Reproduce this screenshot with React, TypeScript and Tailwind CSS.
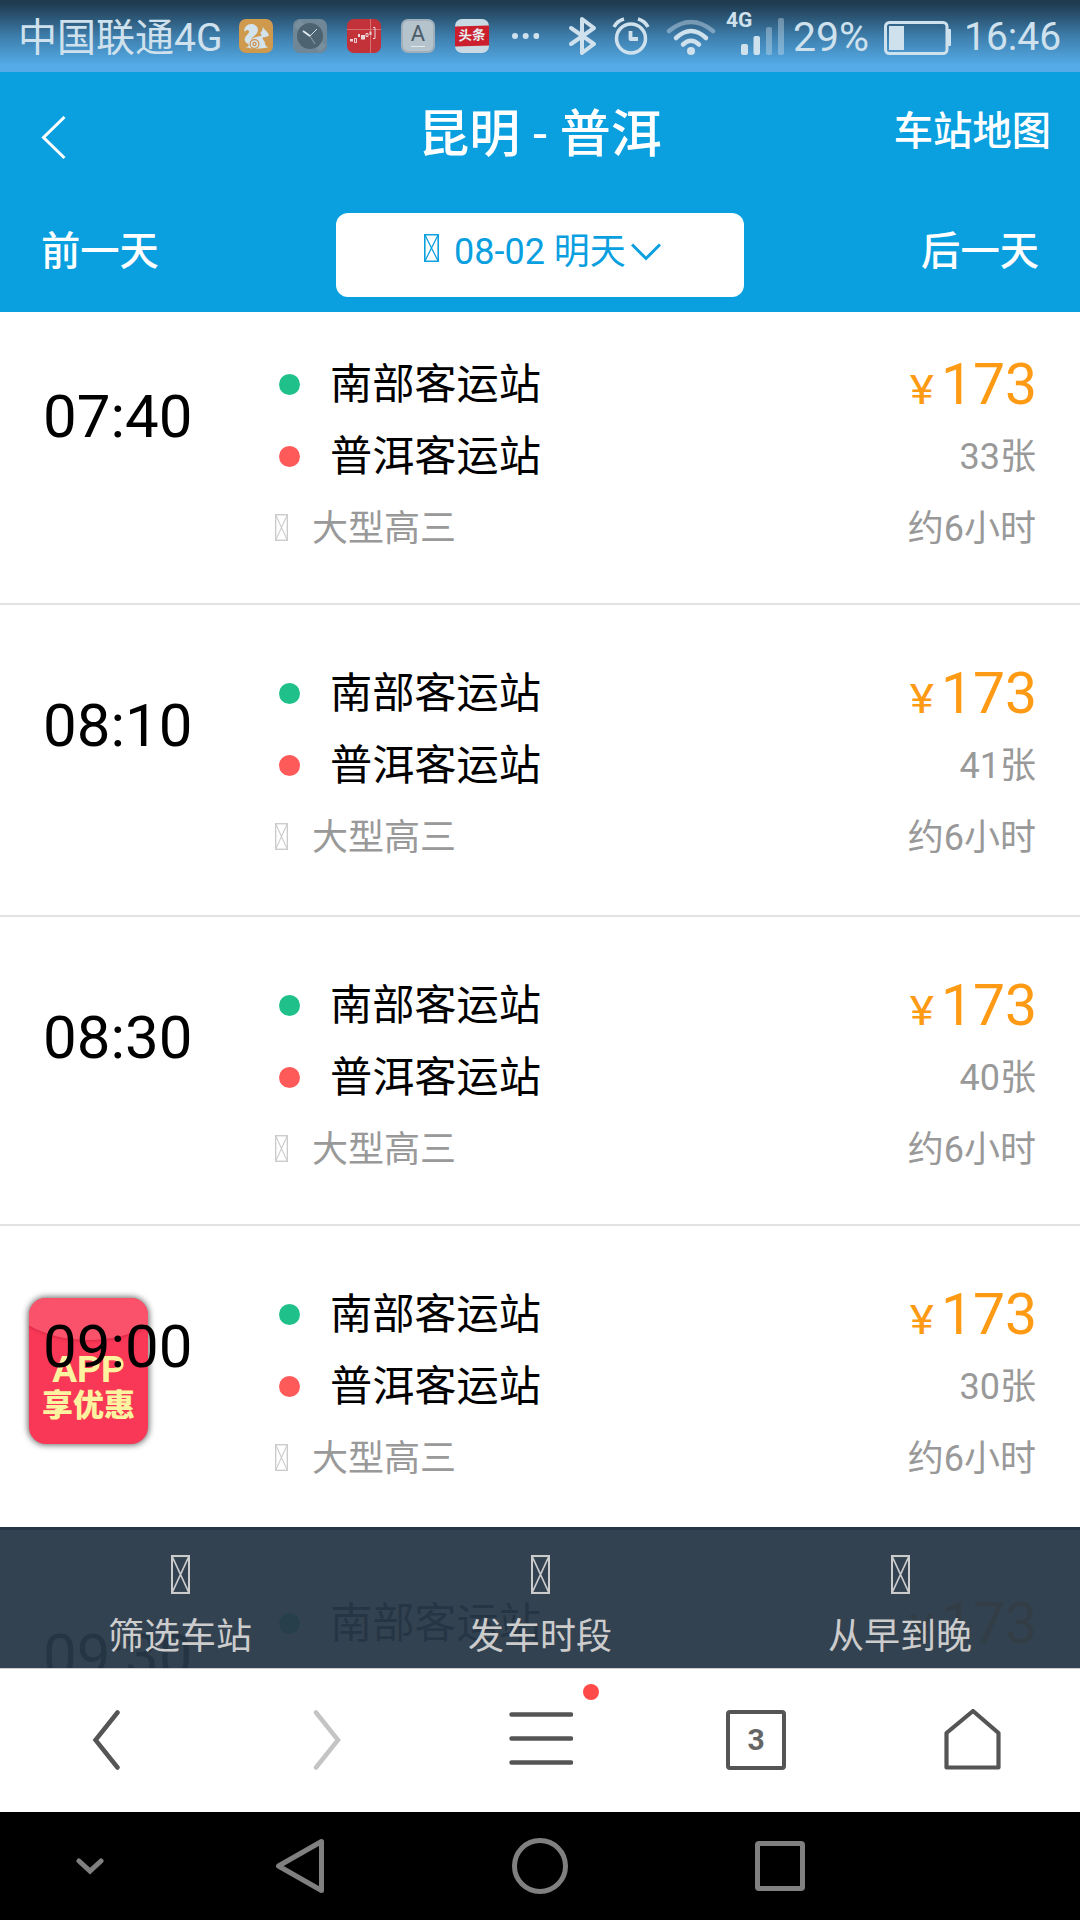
import React from 'react';

type Trip = {
  time: string;
  seats?: string;
  height: string;
};

const trips: Trip[] = [
  { time: '07:40', seats: '33张', height: 'h-[293px] pt-[35px]' },
  { time: '08:10', seats: '41张', height: 'h-[312px] pt-[51px]' },
  { time: '08:30', seats: '40张', height: 'h-[309px] pt-[51px]' },
  { time: '09:00', seats: '30张', height: 'h-[309px] pt-[51px]' },
  { time: '09:30', height: 'h-[309px] pt-[51px]' },
];

const filters = ['筛选车站', '发车时段', '从早到晚'];

// Box shown where the icon font has no glyph
const MissingGlyph = ({ className }: { className: string }) => (
  <svg className={className} viewBox="0 0 19 38" preserveAspectRatio="none" fill="none" stroke="currentColor">
    <rect x="1" y="1" width="17" height="36" strokeWidth="2" />
    <path d="M1 1L18 37M18 1L1 37" strokeWidth="1.6" />
  </svg>
);

const SquirrelIcon = () => (
  <svg className="h-[34px] w-[34px]" viewBox="0 0 34 34">
    <rect width="34" height="34" rx="7" fill="#cf9a4d" />
    <path
      d="M6 28C9 28 10 27 9.500 25C5 24 4.500 19 8 16C10 14 11 12 9 11C7.500 10.500 6 12 5.500 13C4.500 9 8 5 12 5C18 5 20.500 10 18 14C16 17 13 18 12 21C15 17 20 18 23 16.500C21 15 21 13 23 12L24 8L26 11C28 12 29 14 30 16.500C28 18 25 18 23.500 18.500C23.500 21 26 22 26 24.500C26 27 28 27.500 29 28.500Q17 31 6 28Z"
      fill="#d3e3ec"
    />
    <circle cx="15.500" cy="25" r="5" fill="#cf904c" />
    <circle cx="15.500" cy="25" r="3.800" fill="#d3e3ec" />
    <circle cx="15.500" cy="25" r="2.200" fill="#cf904c" />
    <circle cx="15.500" cy="25" r="1" fill="#d3e3ec" />
  </svg>
);

const ClockIcon = () => (
  <svg className="h-[34px] w-[34px]" viewBox="0 0 34 34">
    <rect width="34" height="34" rx="7" fill="#6f8797" />
    <path d="M1 7L7 1L33 27L27 33Z" fill="#8399a8" opacity=".5" />
    <circle cx="17" cy="17" r="13" fill="#4d6372" />
    <path d="M10 12L17 17" stroke="#e2ecf2" strokeWidth="1.8" />
    <path d="M17 17L24 10" stroke="#d5e2ea" strokeWidth="1" />
    <path d="M17 17L22 25" stroke="#8fa2af" strokeWidth="1" />
  </svg>
);

const StockIcon = () => (
  <svg className="h-[34px] w-[34px]" viewBox="0 0 34 34">
    <rect width="34" height="34" rx="7" fill="#c23238" />
    <path d="M0 10.500H34M23.500 0V34" stroke="#d98083" strokeWidth=".8" />
    <path
      d="M7.500 19.500h2v4h-2zM19 14.500h2v3h-2zM26 8.500h2v11h-2"
      fill="none"
      stroke="#ead5da"
      strokeWidth="1"
    />
    <path d="M3 20h3v2.500H3zM11 15h2v3h-2zM14 16h4v4.500h-4zM22.500 12.500h2v3.500h-2z" fill="#ead5da" />
  </svg>
);

const KeyIcon = () => (
  <div className="flex h-[34px] w-[34px] flex-col items-center rounded-[7px] border-2 border-[#9fb0bc] bg-[#b5c3cc] text-[#4b5c69]">
    <span className="text-[22px] leading-[26px]">A</span>
    <span className="-mt-px h-px w-[14px] bg-[#e2ebf0]" />
  </div>
);

const NewsIcon = () => (
  <div className="flex h-[34px] w-[34px] items-center overflow-hidden rounded-[7px] bg-[#c9dae4]">
    <div className="h-5 w-[34px] -skew-y-2 bg-[#cc1f2d] text-center text-[13.5px] leading-[19px] font-bold text-[#e6eef2]">
      头条
    </div>
  </div>
);

const StatusBar = () => (
  <div className="flex h-[72px] items-center bg-linear-to-b from-[#1f3b50] from-5% via-[#3d7dab] via-50% to-[#54abe7] to-90% pl-[18px] text-[40px] text-[#cfe1ed]">
    <span className="w-[221px] pt-1 text-[39px] leading-[68px] whitespace-nowrap">中国联通4G</span>
    <div className="flex gap-5">
      <SquirrelIcon />
      <ClockIcon />
      <StockIcon />
      <KeyIcon />
      <NewsIcon />
    </div>
    <svg className="ml-[22px] h-2 w-7" viewBox="0 0 28 8" fill="currentColor">
      <circle cx="4" cy="4" r="3" />
      <circle cx="14.700" cy="4" r="3" />
      <circle cx="25.400" cy="4" r="3" />
    </svg>
    {/* bluetooth */}
    <svg className="ml-[29px] h-10 w-[30px]" viewBox="0 0 30 40" fill="none" stroke="currentColor" strokeWidth="4" strokeLinejoin="round" strokeLinecap="round">
      <path d="M3 12L26 28L14 37V3L26 12L3 28" />
    </svg>
    {/* alarm */}
    <svg className="ml-[14px] h-10 w-[38px]" viewBox="0 0 38 40" fill="none" stroke="currentColor">
      <circle cx="19" cy="22.500" r="14.500" strokeWidth="3.500" />
      <path d="M18.500 15V23H26" strokeWidth="3.800" strokeLinejoin="round" />
      <path d="M2 11Q5 5 12 3M36 11Q33 5 26 3" strokeWidth="3.500" />
    </svg>
    {/* wifi */}
    <svg className="ml-[15px] h-10 w-[52px]" viewBox="0 0 52 40" fill="none" stroke="currentColor" strokeWidth="4.500" strokeLinecap="round">
      <path d="M4 15Q26 -3 48 15" opacity=".45" />
      <path d="M11 22Q26 8 41 22" />
      <path d="M18 28.500Q26 21 34 28.500" />
      <circle cx="26" cy="35" r="4" fill="currentColor" stroke="none" />
    </svg>
    <div className="relative ml-[9px] h-[72px] w-[60px]">
      <span className="absolute top-[8px] left-0 text-[21px] leading-6 font-bold">4G</span>
      <svg className="absolute top-[18px] left-[15px] h-[37px] w-[44px]" viewBox="0 0 44 37" fill="currentColor">
        <rect x="0" y="26" width="7" height="11" rx="2" />
        <rect x="12.500" y="18" width="6.500" height="19" rx="2" />
        <g opacity=".4">
          <rect x="25" y="9" width="6" height="28" rx="2" />
          <rect x="37" y="0" width="6" height="37" rx="2" />
        </g>
      </svg>
    </div>
    <span className="ml-[7px] w-[78px] pt-[3px] text-[41px]">29%</span>
    <svg className="mt-[3px] ml-[13px] h-[34px] w-[68px]" viewBox="0 0 68 34">
      <rect x="1.500" y="1.500" width="61.500" height="31" rx="4" fill="none" stroke="currentColor" strokeWidth="3" />
      <rect x="5" y="5" width="15" height="24" fill="currentColor" />
      <rect x="63" y="8" width="4" height="17" rx="1" fill="currentColor" />
    </svg>
    <span className="ml-[12px] pt-[3px] text-[39px]">16:46</span>
  </div>
);

const Header = () => (
  <header className="h-[240px] bg-[#0a9fdf] text-[39.3px] leading-[60px] font-medium text-white">
    <div className="flex h-[120px] items-center pt-1">
      <div className="flex w-[340px] items-center pt-2 pl-[41px]">
        <svg className="h-[44px] w-[26px]" viewBox="0 0 26 44" fill="none" stroke="currentColor" strokeWidth="3">
          <path d="M23.500 1L2.500 21.500L23.500 42" />
        </svg>
      </div>
      <h1 className="w-[400px] pt-0.5 text-center text-[51px] font-medium">
        昆明<span className="font-normal"> - </span>普洱
      </h1>
      <span className="-mt-[5px] w-[311px] text-right">车站地图</span>
    </div>
    <div className="flex items-start pt-[21px]">
      <span className="w-[336px] pt-[9px] pl-[41px]">前一天</span>
      <button className="flex h-[84px] w-[408px] items-start rounded-xl bg-white pt-[9px] pl-[88px] text-[36px] font-normal text-[#0a9fdf]">
        <MissingGlyph className="mt-[12px] h-7 w-[15px]" />
        <span className="ml-[15px] leading-[60px]">08-02 明天</span>
        <svg className="mt-[21px] ml-[5px] h-[18px] w-[30px]" viewBox="0 0 30 18" fill="none" stroke="currentColor" strokeWidth="3">
          <path d="M1 1.500L15 15.500L29 1.500" />
        </svg>
      </button>
      <span className="w-[295px] pt-[9px] text-right">后一天</span>
    </div>
  </header>
);

const TripRow = ({ trip }: { trip: Trip }) => (
  <li className={`flex border-b-2 border-[#e2e2e2] ${trip.height}`}>
    <div className="z-10 w-[275px] pt-[34px] pl-[43px] text-[60px] leading-[72px]">{trip.time}</div>
    <div className="flex-1 text-[42.2px] leading-[72px]">
      <div className="flex h-[72px] items-center">
        <span className="mt-0.5 mr-[30px] ml-1 h-[21px] w-[21px] rounded-full bg-[#1fc08a]" />
        <span className="pt-1">南部客运站</span>
      </div>
      {trip.seats && (
        <>
          <div className="flex h-[72px] items-center">
            <span className="mt-0.5 mr-[30px] ml-1 h-[21px] w-[21px] rounded-full bg-[#ff5a5a]" />
            <span className="pt-1">普洱客运站</span>
          </div>
          <div className="flex h-[72px] items-center text-[36px] text-[#999]">
            <MissingGlyph className="mr-[24px] h-[27px] w-[13px] text-[#ccc]" />
            <span className="pt-[3px]">大型高三</span>
          </div>
        </>
      )}
    </div>
    <div className="w-[300px] pt-0.5 pr-[44px] text-right text-[36px] leading-[72px] text-[#999]">
      <div className="-mr-px h-[72px] text-[57px] text-[#ff9a14]">
        <span className="mr-[7px] inline-block origin-right scale-x-115 text-[40px]">¥</span>173
      </div>
      {trip.seats && (
        <>
          <div className="h-[72px]">{trip.seats}</div>
          <div className="h-[72px]">约6小时</div>
        </>
      )}
    </div>
  </li>
);

const CouponBadge = () => (
  <div className="absolute top-[986px] left-[29px] h-[146px] w-[119px] overflow-hidden rounded-[17px] bg-[#f93756] text-center font-black text-[#fcf3a0] shadow-[0_0_6px_1px_rgba(0,0,0,0.6)]">
    <div className="absolute -top-[58px] -left-[25px] h-[100px] w-[169px] rounded-[50%] bg-[#fb526c] shadow-[0_1px_3px_rgba(180,20,50,0.5)]" />
    <div className="relative pt-[53px] text-[37px] leading-[38px] font-bold">APP</div>
    <div className="pt-px text-[31px] leading-[32px]">享优惠</div>
  </div>
);

const FilterBar = () => (
  <div className="absolute bottom-0 left-0 z-20 flex h-[141px] w-full border-t-[3px] border-[#263545] bg-[#283848]/95 text-[36px] text-[#ccc]">
    {filters.map((label) => (
      <div key={label} className="flex flex-1 flex-col items-center pt-[25px]">
        <MissingGlyph className="h-[39px] w-[19px]" />
        <span className="mt-[16px] leading-[54px]">{label}</span>
      </div>
    ))}
  </div>
);

const BrowserBar = () => (
  <div className="grid h-[144px] grid-cols-5 items-center border-t border-[#ccc] bg-white pb-0.5 text-[#555]">
    <svg className="h-[60px] w-[216px]" viewBox="0 0 216 60" fill="none" stroke="currentColor" strokeWidth="4.500" strokeLinecap="round">
      <path d="M117.500 2.500L95.500 30L117.500 57.500" />
    </svg>
    <svg className="h-[60px] w-[216px] text-[#c4c4c4]" viewBox="0 0 216 60" fill="none" stroke="currentColor" strokeWidth="4.500" strokeLinecap="round">
      <path d="M100 2.500L122 30L100 57.500" />
    </svg>
    <div className="relative flex justify-center">
      <svg className="h-[60px] w-[66px]" viewBox="0 0 66 60" stroke="currentColor" strokeWidth="4.500" strokeLinecap="round">
        <path d="M4.500 4.500H64M4.500 28.500H64M4.500 52.500H64" />
      </svg>
      <span className="absolute -top-[26px] left-[151px] h-4 w-4 rounded-full bg-[#ff4a4a]" />
    </div>
    <div className="flex justify-center">
      <div className="flex h-[60px] w-[60px] items-center justify-center rounded border-4 border-[#555] text-[30px] font-bold text-[#666]">
        3
      </div>
    </div>
    <svg className="mx-auto h-[62px] w-[58px]" viewBox="0 0 58 62" fill="none" stroke="currentColor" strokeWidth="4.200" strokeLinejoin="round">
      <path d="M3.500 24L30 2L55.500 24V58.500H3.500Z" />
    </svg>
  </div>
);

const SystemNav = () => (
  <nav className="flex h-[108px] items-center bg-black text-[#808080]">
    <div className="flex w-[180px] justify-center">
      <svg className="h-[18px] w-[28px]" viewBox="0 0 28 18" fill="none" stroke="currentColor" strokeWidth="5" strokeLinecap="round">
        <path d="M3 4L14 14L25 4" />
      </svg>
    </div>
    <div className="flex w-[240px] justify-center">
      <svg className="h-[56px] w-[50px]" viewBox="0 0 50 56" fill="none" stroke="currentColor" strokeWidth="5" strokeLinejoin="round">
        <path d="M3.500 28L46.500 3.500V52.500Z" />
      </svg>
    </div>
    <div className="flex w-[240px] justify-center">
      <div className="h-14 w-14 rounded-full border-5 border-[#808080]" />
    </div>
    <div className="flex w-[240px] justify-center">
      <div className="h-[50px] w-[50px] rounded border-5 border-[#808080]" />
    </div>
  </nav>
);

const App = () => {
  return (
    <div className="h-[1920px] w-[1080px] overflow-hidden bg-white font-[Roboto,'Noto_Sans_CJK_SC',sans-serif] text-black">
      <StatusBar />
      <Header />
      <main className="relative h-[1356px] overflow-hidden">
        <CouponBadge />
        <ul>
          {trips.map((trip) => (
            <TripRow key={trip.time} trip={trip} />
          ))}
        </ul>
        <FilterBar />
      </main>
      <BrowserBar />
      <SystemNav />
    </div>
  );
};

export default App;
